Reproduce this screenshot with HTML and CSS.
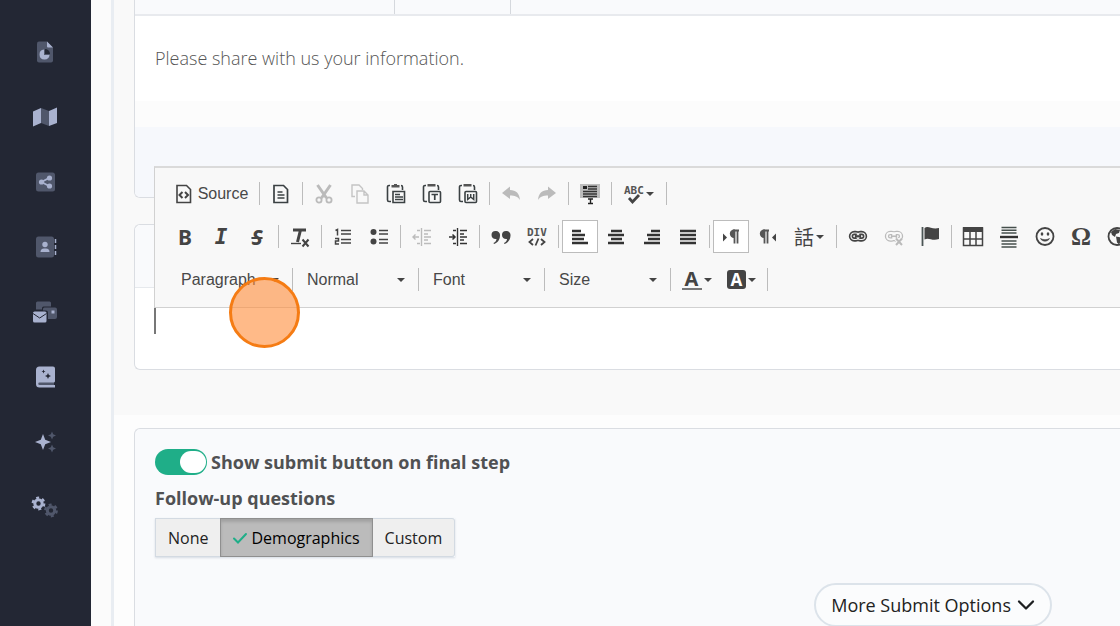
FILE: index.html
```html
<!DOCTYPE html>
<html lang="en">
<head>
    <meta charset="UTF-8">
    <meta name="viewport" content="width=device-width, initial-scale=1.0">
    <title>Form Builder</title>
    <link rel="stylesheet" href="styles.css">
</head>
<body>
    <nav class="sidebar">
        <a href="#" class="nav-link" aria-label="Reports">
            <svg width="26" height="26" viewBox="0 0 26 26"><path fill="#50576b" d="M7 2.500h8l6 6V21.500a2 2 0 0 1-2 2H7a2 2 0 0 1-2-2v-17a2 2 0 0 1 2-2z"/><path fill="#a9b2cf" d="M15 2.500l6 6h-5a1 1 0 0 1-1-1zM12 10.500v5.500h5.500a5 5 0 1 1-5.500-5.500z"/><path fill="#232734" d="M13 10a5 5 0 0 1 5 5h-5z"/></svg>
        </a>
        <a href="#" class="nav-link" aria-label="Map">
            <svg width="26" height="26" viewBox="0 0 26 26"><path fill="#50576b" d="M9 4l8 3v15l-8-3z"/><path fill="#a9b2cf" d="M1 7.500L9 4v15l-8 3.500zM17 7l8-3.500V19l-8 3z"/></svg>
        </a>
        <a href="#" class="nav-link" aria-label="Share">
            <svg width="26" height="26" viewBox="0 0 26 26"><rect x="4" y="3.500" width="19" height="19" rx="2.500" fill="#50576b"/><path d="M17 9l-7.500 4 7.500 4" fill="none" stroke="#a9b2cf" stroke-width="1.800"/><circle cx="9.500" cy="13" r="2.600" fill="#a9b2cf"/><circle cx="17.500" cy="9" r="2.600" fill="#a9b2cf"/><circle cx="17.500" cy="17" r="2.600" fill="#a9b2cf"/></svg>
        </a>
        <a href="#" class="nav-link" aria-label="Contacts">
            <svg width="26" height="26" viewBox="0 0 26 26"><rect x="4" y="2.500" width="18" height="21" rx="2.500" fill="#50576b"/><circle cx="13" cy="10.500" r="2.700" fill="#a9b2cf"/><path d="M8.500 18a3.500 3.500 0 0 1 3.500-3.500h2a3.500 3.500 0 0 1 3.500 3.500z" fill="#a9b2cf"/><path d="M23.500 5v4M23.500 11v4M23.500 17v4" stroke="#a9b2cf" stroke-width="1.500"/></svg>
        </a>
        <a href="#" class="nav-link" aria-label="Mail">
            <svg width="26" height="26" viewBox="0 0 26 26"><path fill="#50576b" d="M5.500 2.500h12a1.500 1.500 0 0 1 1.500 1.500v3.500H11.500a1.500 1.500 0 0 0-1.500 1.500v1.500H4V4a1.500 1.500 0 0 1 1.500-1.500zM12.500 8.500h10.500a2 2 0 0 1 2 2V18a2 2 0 0 1-2 2h-7v-6.500a2 2 0 0 0-2-2H11V10a1.500 1.500 0 0 1 1.500-1.500z"/><rect x="19.500" y="11.500" width="3" height="3" fill="#a9b2cf"/><rect x="1" y="12.500" width="13.500" height="11" rx="1.500" fill="#a9b2cf"/><path d="M1 14.500l6.700 4.500 6.800-4.500" fill="none" stroke="#232734"/></svg>
        </a>
        <a href="#" class="nav-link" aria-label="Guides">
            <svg width="26" height="26" viewBox="0 0 26 26"><path fill="#a9b2cf" d="M7.500 2.500H21a2 2 0 0 1 2 2V17a1.500 1.500 0 0 1-1 1.500V21h1v2.500H7.500A3.500 3.500 0 0 1 4 20V6a3.500 3.500 0 0 1 3.500-3.500z"/><path fill="#50576b" d="M7.500 18.500H22V21H7.500a1.200 1.200 0 0 1 0-2.500z"/><path fill="#232734" d="M11.500 5.500l.6 1.400 1.400.6-1.400.6-.6 1.400-.6-1.400-1.400-.6 1.400-.6zM16 9l.9 2.100 2.100.9-2.100.9L16 15l-.9-2.100L13 12l2.100-.9z"/></svg>
        </a>
        <a href="#" class="nav-link" aria-label="AI tools">
            <svg width="26" height="26" viewBox="0 0 26 26"><path fill="#a9b2cf" d="M11 5l2.200 5.800L19 13l-5.800 2.200L11 21l-2.200-5.800L3 13l5.800-2.200z"/><path fill="#50576b" d="M20 2.500l1.200 2.800L24 6.500l-2.800 1.200L20 10.500l-1.200-2.800L16 6.500l2.800-1.200zM20 15.500l1.200 2.800 2.800 1.200-2.800 1.200-1.200 2.800-1.200-2.800-2.800-1.200 2.800-1.200z"/></svg>
        </a>
        <a href="#" class="nav-link" aria-label="Settings">
            <svg width="26" height="26" viewBox="0 0 26 26"><g fill="none" stroke="#a9b2cf"><circle cx="6.500" cy="9.500" r="3.700" stroke-width="3"/><circle cx="6.500" cy="9.500" r="5.800" stroke-width="2.200" stroke-dasharray="3 3.070"/></g><g fill="none" stroke="#50576b"><circle cx="19" cy="16.500" r="3.700" stroke-width="3"/><circle cx="19" cy="16.500" r="5.800" stroke-width="2.200" stroke-dasharray="3 3.070"/></g></svg>
        </a>
    </nav>

    <main class="content">
        <section class="steps">
            <div class="card intro-card">
                <div class="tab-strip">
                    <div class="tab tab-wide"></div>
                    <div class="tab"></div>
                </div>
                <p class="intro-text">Please share with us your information.</p>
                <div class="intro-gap"></div>
                <div class="intro-footer"></div>
            </div>

            <div class="card editor-card">
                <div class="editor-header"></div>
                <div class="editor-body" role="textbox" aria-label="Rich text editor">
                    <div class="caret"></div>
                </div>

                <div class="toolbar">
                    <div class="tool-row">
                        <button class="tool source">
                            <svg width="18" height="20" viewBox="0 0 18 20"><path d="M2 1.500h9.500l4 4v13H2z" fill="none" stroke="#444" stroke-width="1.600"/><path d="M7.500 8L4.500 11l3 3M10 8l3 3-3 3" fill="none" stroke="#444" stroke-width="2"/></svg>
                            Source
                        </button>
                        <span class="sep"></span>
                        <button class="tool" aria-label="New page">
                            <svg width="20" height="20" viewBox="0 0 20 20"><path d="M3 1.500h9.500l4 4v13H3z" fill="none" stroke="#3b4143" stroke-width="1.700"/><path d="M6.500 8h5M6.500 11h7M6.500 14h7" stroke="#3b4143" stroke-width="1.500"/></svg>
                        </button>
                        <span class="sep"></span>
                        <button class="tool" aria-label="Cut">
                            <svg width="20" height="20" viewBox="0 0 20 20"><path d="M3.500 1l9 13M16.500 1l-9 13" stroke="#bbb" stroke-width="3"/><g fill="none" stroke="#bbb" stroke-width="1.800"><circle cx="5" cy="16" r="2.600"/><circle cx="15" cy="16" r="2.600"/></g></svg>
                        </button>
                        <button class="tool" aria-label="Copy">
                            <svg width="20" height="20" viewBox="0 0 20 20"><path d="M5 12.500H2V1h7l3.500 3.500V6M7 7h7l4 4v8H7zM14 7v4h4" fill="none" stroke="#c4c4c4" stroke-width="1.400"/></svg>
                        </button>
                        <button class="tool" aria-label="Paste">
                            <svg width="20" height="20" viewBox="0 0 20 20"><path d="M4 1.500H3A1.500 1.500 0 0 0 1.500 3v13A1.500 1.500 0 0 0 3 17.500h2M15 1.500A1.500 1.500 0 0 1 16.500 3v3" fill="none" stroke="#3b4143" stroke-width="1.600"/><path d="M8 0h3v1h2.500v2.500h-8V1H8z" fill="#555"/><path d="M7 7.500h11.500v11H7z" fill="#f8f8f8" stroke="#3b4143" stroke-width="1.600"/><path d="M9 10.500h5M9 13h8M9 15.500h8" stroke="#3b4143" stroke-width="1.300"/></svg>
                        </button>
                        <button class="tool" aria-label="Paste as plain text">
                            <svg width="20" height="20" viewBox="0 0 20 20"><path d="M4 1.500H3A1.500 1.500 0 0 0 1.500 3v13A1.500 1.500 0 0 0 3 17.500h2M15 1.500A1.500 1.500 0 0 1 16.500 3v3" fill="none" stroke="#3b4143" stroke-width="1.600"/><path d="M5.500 0h8v2.500h-8z" fill="#555"/><rect x="7" y="7.500" width="11.500" height="11" rx="1" fill="#f8f8f8" stroke="#3b4143" stroke-width="1.600"/><path d="M9.500 10.500h6.500M12.750 10.500v5.500" stroke="#3b4143" stroke-width="1.700"/></svg>
                        </button>
                        <button class="tool" aria-label="Paste from Word">
                            <svg width="20" height="20" viewBox="0 0 20 20"><path d="M4 1.500H3A1.500 1.500 0 0 0 1.500 3v13A1.500 1.500 0 0 0 3 17.500h2M15 1.500A1.500 1.500 0 0 1 16.500 3v3" fill="none" stroke="#3b4143" stroke-width="1.600"/><path d="M5.500 0h8v2.500h-8z" fill="#555"/><rect x="7" y="7.500" width="11.500" height="11" rx="1" fill="#f8f8f8" stroke="#3b4143" stroke-width="1.600"/><path d="M9.700 10v5.500l3-2.500 3 2.500V10M12.700 10v4" fill="none" stroke="#3b4143" stroke-width="1.500"/></svg>
                        </button>
                        <span class="sep"></span>
                        <button class="tool" aria-label="Undo">
                            <svg width="20" height="20" viewBox="0 0 20 20"><path d="M1 9l8-6.500V6c6 0 9.500 3.500 10 10-2.500-3.500-5-4.500-10-4.500V15z" fill="#bbb"/></svg>
                        </button>
                        <button class="tool" aria-label="Redo">
                            <svg width="20" height="20" viewBox="0 0 20 20"><path d="M19 9l-8-6.500V6C5 6 1.500 9.500 1 16c2.500-3.500 5-4.500 10-4.500V15z" fill="#bbb"/></svg>
                        </button>
                        <span class="sep"></span>
                        <button class="tool" aria-label="Select all">
                            <svg width="20" height="20" viewBox="0 0 20 20"><path d="M0 0h20v14H0z" fill="#bdbdbd"/><path d="M3 2h4v3H3z" fill="#222"/><path d="M8 2.500h9M8 5h9M3 7.500h14M3 10h14M3 12.500h14" stroke="#333" stroke-width="1.400"/><path d="M6 14h8v6H6z" fill="#f8f8f8"/><path d="M8 15h5M10.500 15v4.500M8 19.500h5" stroke="#222" stroke-width="1.400"/></svg>
                        </button>
                        <span class="sep"></span>
                        <button class="tool tool-menu" aria-label="Spell check">
                            <svg width="20" height="20" viewBox="0 0 20 20"><text x="0" y="10" class="mono-glyph">ABC</text><path d="M5 14l3.500 4L15 11" fill="none" stroke="#444" stroke-width="2.800"/></svg>
                        </button>
                        <span class="sep"></span>
                    </div>

                    <div class="tool-row">
                        <button class="tool glyph-bold" aria-label="Bold">B</button>
                        <button class="tool glyph-italic" aria-label="Italic">I</button>
                        <button class="tool glyph-strike" aria-label="Strikethrough"><s>S</s></button>
                        <span class="sep"></span>
                        <button class="tool" aria-label="Remove format">
                            <svg width="20" height="20" viewBox="0 0 20 20"><path d="M3 3h13M10.500 3L7.500 15" fill="none" stroke="#444" stroke-width="3"/><path d="M1 16.500h10" stroke="#444" stroke-width="1.400"/><path d="M12.500 12.500l6 7M18.500 12.500l-6 7" stroke="#444" stroke-width="2"/></svg>
                        </button>
                        <span class="sep"></span>
                        <button class="tool" aria-label="Numbered list">
                            <svg width="20" height="20" viewBox="0 0 20 20"><path d="M2.500 3.500l2-1v6M2 11.500h3.500v2.500H2.500v3H6" fill="none" stroke="#444" stroke-width="1.500"/><path d="M8 3.500h10M8 7h10M8 12.500h10M8 16h10" stroke="#444" stroke-width="1.600"/></svg>
                        </button>
                        <button class="tool" aria-label="Bulleted list">
                            <svg width="20" height="20" viewBox="0 0 20 20"><circle cx="4.500" cy="5" r="3" fill="#444"/><circle cx="4.500" cy="14.500" r="3" fill="#444"/><path d="M10 3.500h9M10 7h9M10 12.500h9M10 16h9" stroke="#444" stroke-width="1.600"/></svg>
                        </button>
                        <span class="sep"></span>
                        <button class="tool" aria-label="Decrease indent">
                            <svg width="20" height="20" viewBox="0 0 20 20"><path d="M9.500 1v18" stroke="#bbb" stroke-width="1.400"/><path d="M12 3.500h7M12 7h4M12 10h7M12 13h4M12 16.500h7M5 3.500h3M5 16.500h3M1 10h6M3.500 7.500L1 10l2.500 2.500" fill="none" stroke="#bbb" stroke-width="1.400"/></svg>
                        </button>
                        <button class="tool" aria-label="Increase indent">
                            <svg width="20" height="20" viewBox="0 0 20 20"><path d="M9.500 1v18" stroke="#333" stroke-width="1.400"/><path d="M12 3.500h7M12 7h4M12 10h7M12 13h4M12 16.500h7M5 3.500h3M5 16.500h3M1 10h6M4.500 7.500L7 10l-2.500 2.500" fill="none" stroke="#333" stroke-width="1.500"/></svg>
                        </button>
                        <span class="sep"></span>
                        <button class="tool" aria-label="Block quote">
                            <svg width="20" height="20" viewBox="0 0 20 20"><path d="M4.500 4A4 4 0 0 1 9 8.500c0 4-2.500 7.500-6 8.500l-.5-1C4.500 15 5.500 13.500 5.500 12 3 12.500.5 11 .5 8a4 4 0 0 1 4-4zM15 4a4 4 0 0 1 4.500 4.500c0 4-2.500 7.500-6 8.500l-.5-1c2-1 3-2.500 3-4-2.500.5-5-1-5-4a4 4 0 0 1 4-4z" fill="#444"/></svg>
                        </button>
                        <button class="tool" aria-label="Div container">
                            <svg width="20" height="20" viewBox="0 0 20 20"><text x="0" y="9" class="mono-glyph">DIV</text><path d="M6 12l-3.500 3L6 18M14 12l3.500 3-3.500 3M11.500 11.500l-3 7" fill="none" stroke="#444" stroke-width="1.800"/></svg>
                        </button>
                        <span class="sep"></span>
                        <button class="tool tool-on" aria-label="Align left">
                            <svg width="20" height="20" viewBox="0 0 20 20"><path d="M2 4h9M2 8h13M2 12h12M2 16h16" stroke="#333" stroke-width="2.400"/></svg>
                        </button>
                        <button class="tool" aria-label="Center">
                            <svg width="20" height="20" viewBox="0 0 20 20"><path d="M5 4h11M2 8h16M5 12h11M2 16h16" stroke="#333" stroke-width="2.400"/></svg>
                        </button>
                        <button class="tool" aria-label="Align right">
                            <svg width="20" height="20" viewBox="0 0 20 20"><path d="M9 4h9M5 8h13M6 12h12M2 16h16" stroke="#333" stroke-width="2.400"/></svg>
                        </button>
                        <button class="tool" aria-label="Justify">
                            <svg width="20" height="20" viewBox="0 0 20 20"><path d="M2 4h16M2 8h16M2 12h16M2 16h16" stroke="#333" stroke-width="2.400"/></svg>
                        </button>
                        <span class="sep"></span>
                        <button class="tool tool-on" aria-label="Text direction left to right">
                            <svg width="20" height="20" viewBox="0 0 20 20"><path d="M2 6.500l4 4-4 4z" fill="#444"/><path d="M12 3.500h6M13.500 3.500v13M16.500 3.500v13" stroke="#555" stroke-width="1.800"/><path d="M14 2.600h-1a4.200 4.200 0 0 0 0 8.400h1z" fill="#555"/></svg>
                        </button>
                        <button class="tool" aria-label="Text direction right to left">
                            <svg width="20" height="20" viewBox="0 0 20 20"><path d="M19 6.500l-4 4 4 4z" fill="#444"/><path d="M6 3.500h6M7.500 3.500v13M10.500 3.500v13" stroke="#555" stroke-width="1.800"/><path d="M8 2.600H7A4.200 4.200 0 0 0 7 11h1z" fill="#555"/></svg>
                        </button>
                        <button class="tool tool-menu glyph-lang" aria-label="Set language">話</button>
                        <span class="sep"></span>
                        <button class="tool" aria-label="Link">
                            <svg width="20" height="20" viewBox="0 0 20 20"><g fill="none" stroke="#444" stroke-width="4.400"><rect x="3" y="6" width="8" height="6.500" rx="3.200"/><rect x="9" y="6" width="8" height="6.500" rx="3.200"/></g><g fill="none" stroke="#eee" stroke-width="1.200"><rect x="3" y="6" width="8" height="6.500" rx="3.200"/><rect x="9" y="6" width="8" height="6.500" rx="3.200"/></g><path d="M7 9.250h6" stroke="#444" stroke-width="2"/></svg>
                        </button>
                        <button class="tool" aria-label="Unlink">
                            <svg width="20" height="20" viewBox="0 0 20 20"><g fill="none" stroke="#bbb" stroke-width="4.400"><rect x="3" y="6" width="8" height="6.500" rx="3.200"/><rect x="9" y="6" width="8" height="6.500" rx="3.200"/></g><g fill="none" stroke="#f8f8f8" stroke-width="1.800"><rect x="3" y="6" width="8" height="6.500" rx="3.200"/><rect x="9" y="6" width="8" height="6.500" rx="3.200"/></g><path d="M7 9.250h6" stroke="#bbb" stroke-width="1.600"/><path d="M12 11.500l6 6M18 11.500l-6 6" stroke="#f8f8f8" stroke-width="4"/><path d="M12 11.500l6 6.500M18 11.500l-6 6.500" stroke="#bbb" stroke-width="2"/></svg>
                        </button>
                        <button class="tool" aria-label="Anchor">
                            <svg width="20" height="20" viewBox="0 0 20 20"><path d="M2.500 0v19" stroke="#4b5555" stroke-width="1.800"/><path d="M4.500 1c4-3 7 2 14.500 0v11c-7 2.500-10-2-14.500.5z" fill="#444"/></svg>
                        </button>
                        <span class="sep"></span>
                        <button class="tool" aria-label="Table">
                            <svg width="22" height="20" viewBox="0 0 22 20"><path d="M1.500 1h19v17.500h-19zM1.500 12h19M8 5v13.500M14 5v13.500" fill="none" stroke="#444" stroke-width="1.500"/><path d="M1 0h20v5H1z" fill="#444"/></svg>
                        </button>
                        <button class="tool" aria-label="Horizontal line">
                            <svg width="20" height="20" viewBox="0 0 20 20"><path d="M2.500.5h15M2.500 3.200h15M2.500 6h15M2.500 14h15M2.500 17h15M2.500 20h15" stroke="#454f4c" stroke-width="1.500"/><path d="M1 10h18" stroke="#333" stroke-width="2.400"/></svg>
                        </button>
                        <button class="tool" aria-label="Smiley">
                            <svg width="20" height="20" viewBox="0 0 20 20"><circle cx="10" cy="9.500" r="8.500" fill="none" stroke="#444" stroke-width="1.800"/><ellipse cx="7" cy="7" rx="1.300" ry="1.700" fill="#444"/><ellipse cx="13" cy="7" rx="1.300" ry="1.700" fill="#444"/><path d="M5.500 11.500c1.500 3.500 7.500 3.500 9 0-2.500 1.500-6.500 1.500-9 0z" fill="#444" stroke="#444" stroke-width=".6"/></svg>
                        </button>
                        <button class="tool glyph-omega" aria-label="Special character">Ω</button>
                        <button class="tool" aria-label="IFrame">
                            <svg width="20" height="20" viewBox="0 0 20 20"><circle cx="10" cy="9.500" r="8.500" fill="none" stroke="#444" stroke-width="1.800"/><path d="M4 5l4-3 5 1-1 3-3 1-1 3-3-2zM9 9.500l5 1 1 2-3 5-2-2z" fill="#444"/></svg>
                        </button>
                    </div>

                    <div class="tool-row combo-row">
                        <span class="combo"><select aria-label="Paragraph format"><option>Paragraph</option></select></span>
                        <span class="sep"></span>
                        <span class="combo"><select aria-label="Style"><option>Normal</option></select></span>
                        <span class="sep"></span>
                        <span class="combo"><select aria-label="Font"><option>Font</option></select></span>
                        <span class="sep"></span>
                        <span class="combo"><select aria-label="Size"><option>Size</option></select></span>
                        <span class="sep"></span>
                        <button class="tool tool-color" aria-label="Text color"><span class="text-color">A</span></button>
                        <button class="tool tool-color" aria-label="Background color"><span class="fill-color">A</span></button>
                        <span class="sep"></span>
                    </div>
                </div>

                <div class="click-marker"></div>
            </div>
        </section>

        <section class="submit-area">
            <div class="card submit-card">
                <div class="switch-row">
                    <input type="checkbox" id="show-submit" class="switch" checked>
                    <label for="show-submit" class="field-label">Show submit button on final step</label>
                </div>
                <div class="field-label" id="follow-up-label">Follow-up questions</div>
                <div class="btn-group" role="group" aria-labelledby="follow-up-label">
                    <button class="btn">None</button>
                    <button class="btn btn-active">
                        <svg width="14" height="12" viewBox="0 0 14 12"><path d="M1 6.500l4 4L13 2" fill="none" stroke="#1fae88" stroke-width="2" stroke-linecap="round"/></svg>
                        Demographics
                    </button>
                    <button class="btn">Custom</button>
                </div>
                <div class="more-row">
                    <button class="btn-more">
                        More Submit Options
                        <svg width="18" height="12" viewBox="0 0 18 12"><path d="M2 2.500l7 7 7-7" fill="none" stroke="#1d1f21" stroke-width="2.300" stroke-linecap="round" stroke-linejoin="round"/></svg>
                    </button>
                </div>
            </div>
        </section>
    </main>
</body>
</html>
```
FILE: styles.css
```css
* {
    box-sizing: border-box;
}

body {
    display: flex;
    height: 100vh;
    margin: 0;
    overflow: hidden;
    background-color: #fbfbfb;
    font-family: "Open Sans", sans-serif;
    color: #505153;
}

button {
    margin: 0;
    cursor: pointer;
}

svg {
    flex: none;
    overflow: visible;
}

/* Sidebar */
.sidebar {
    flex: none;
    width: 91px;
    padding: 19px 2px 0 0;
    background-color: #232734;
}

.nav-link {
    display: flex;
    height: 65px;
    align-items: center;
    justify-content: center;
}

/* Page */
.content {
    flex: 1;
    min-width: 0;
    margin-left: 20px;
    border-left: 3px solid #e9edf2;
    overflow: hidden;
}

.steps {
    padding: 0 0 45px 20px;
    background-color: #f9f9f9;
}

.card {
    border: 1px solid #dadde2;
    border-right: none;
    border-radius: 6px 0 0 6px;
    background-color: #fff;
}

.intro-card {
    margin-bottom: 26px;
    border-top: none;
    border-top-left-radius: 0;
    overflow: hidden;
}

.tab-strip {
    display: flex;
    height: 16px;
    border-bottom: 2px solid #e8eaee;
    background-color: #f9fafc;
}

.tab {
    width: 116px;
    border-right: 1px solid #d5d8dd;
}

.tab-wide {
    width: 260px;
}

.intro-text {
    margin: 0;
    padding: 30px 20px;
    font-size: 18px;
    font-weight: 300;
    line-height: 25px;
    color: #555;
}

.intro-gap {
    height: 26px;
    background-color: #fcfcfc;
}

.intro-footer {
    height: 70px;
    background-color: #f6f8fc;
}

/* Editor */
.editor-card {
    position: relative;
}

.editor-header {
    height: 63px;
    border-bottom: 1px solid #e6e9ed;
    border-top-left-radius: 6px;
    background-color: #f9fafc;
}

.editor-body {
    height: 81px;
    padding: 20px 19px;
}

.caret {
    width: 2px;
    height: 26px;
    background-color: #777;
}

.toolbar {
    position: absolute;
    top: -59px;
    left: 19px;
    right: 0;
    padding: 4px 0 6px 12px;
    border: 1px solid #d1d1d1;
    border-top: 2px solid #dadada;
    border-right: none;
    background-color: #f8f8f8;
    overflow: hidden;
}

.tool-row {
    display: flex;
    height: 43px;
    align-items: center;
}

.combo-row {
    padding-left: 3px;
}

.sep {
    flex: none;
    width: 1px;
    height: 23px;
    margin: 0 3px;
    background-color: #bcbcbc;
}

.tool {
    display: flex;
    flex: none;
    width: 36px;
    height: 33px;
    padding: 0;
    align-items: center;
    justify-content: center;
    border: 1px solid transparent;
    background: none;
    color: #444;
}

.tool-on {
    border-color: #bcbcbc;
    background-color: #fff;
}

.source {
    width: 89px;
    gap: 5px;
    font: 16px "Liberation Sans", Arial, sans-serif;
    color: #484848;
}

.tool-menu {
    width: 48px;
}

.tool-color {
    width: 45px;
}

.tool-menu,
.tool-color {
    gap: 2px;
}

/* Small drop-down arrow */
.tool-menu::after,
.tool-color::after,
.combo::after {
    content: "";
    flex: none;
    border: 4px solid transparent;
    border-top-color: #444;
    border-bottom: none;
}

.combo {
    display: flex;
    flex: none;
    width: 119px;
    padding: 0 10px 0 11px;
    align-items: center;
}

.combo select {
    flex: 1;
    min-width: 0;
    padding: 0;
    border: none;
    appearance: none;
    background: none;
    font: 16px "Liberation Sans", Arial, sans-serif;
    color: #484848;
}

.mono-glyph {
    font: bold 11px "DejaVu Sans Mono", monospace;
    fill: #555;
}

.glyph-bold {
    font: bold 21px "Noto Sans", sans-serif;
}

.glyph-italic {
    font: italic bold 21px "DejaVu Sans Mono", monospace;
}

.glyph-strike {
    font: italic bold 21px "Noto Sans", sans-serif;
}

.glyph-lang {
    font: 20px "Noto Sans CJK TC", sans-serif;
}

.glyph-omega {
    font: bold 25px "Liberation Serif", serif;
}

.text-color {
    width: 20px;
    border-bottom: 2px solid #777;
    font: bold 20px/18px "Noto Sans", sans-serif;
}

.fill-color {
    width: 19px;
    border-radius: 3px;
    background-color: #444;
    font: bold 17px/19px "Noto Sans", sans-serif;
    color: #fff;
}

.click-marker {
    position: absolute;
    top: 52px;
    left: 94px;
    width: 71px;
    height: 71px;
    border: 3px solid #f57c14;
    border-radius: 50%;
    background-color: rgba(255, 140, 56, 0.6);
}

/* Submit settings */
.submit-area {
    padding: 13px 0 0 20px;
    background-color: #fdfdfd;
}

.submit-card {
    min-height: 220px;
    padding: 19px 0 20px 20px;
    background-color: #f9fafc;
}

.switch-row {
    display: flex;
    height: 28px;
    margin-bottom: 10px;
    align-items: center;
    gap: 4px;
}

.switch {
    position: relative;
    width: 52px;
    height: 26px;
    margin: 0;
    border-radius: 13px;
    appearance: none;
    background-color: #1fae88;
}

.switch::before {
    content: "";
    position: absolute;
    top: 2px;
    right: 1px;
    width: 26px;
    height: 22px;
    border-radius: 11px;
    background-color: #fff;
}

.field-label {
    font-size: 18px;
    font-weight: 700;
    line-height: 25px;
}

.btn-group {
    display: flex;
    width: fit-content;
    margin-top: 7px;
    box-shadow: 0 1px 2px #d5dbe3;
}

.btn {
    display: flex;
    height: 39px;
    padding: 0 12px;
    align-items: center;
    gap: 4px;
    border: 1px solid #d3dae2;
    background-color: #efefef;
    font: 16px "Open Sans", sans-serif;
    color: #222;
}

.btn:first-child {
    border-right: none;
}

.btn:last-child {
    border-left: none;
    border-radius: 0 3px 3px 0;
}

.btn-active {
    border-color: #8f8f8f;
    background-color: #bbb;
    box-shadow: inset 0 3px 3px #a2a2a2;
    color: #000;
}

.more-row {
    display: flex;
    margin-top: 26px;
    padding-right: 68px;
    justify-content: flex-end;
}

.btn-more {
    display: flex;
    height: 44px;
    padding: 0 15px;
    align-items: center;
    gap: 6px;
    border: 2px solid #dce3ea;
    border-radius: 22px;
    background-color: #fbfcfd;
    font: 18px "Open Sans", sans-serif;
    color: #222;
}
```
